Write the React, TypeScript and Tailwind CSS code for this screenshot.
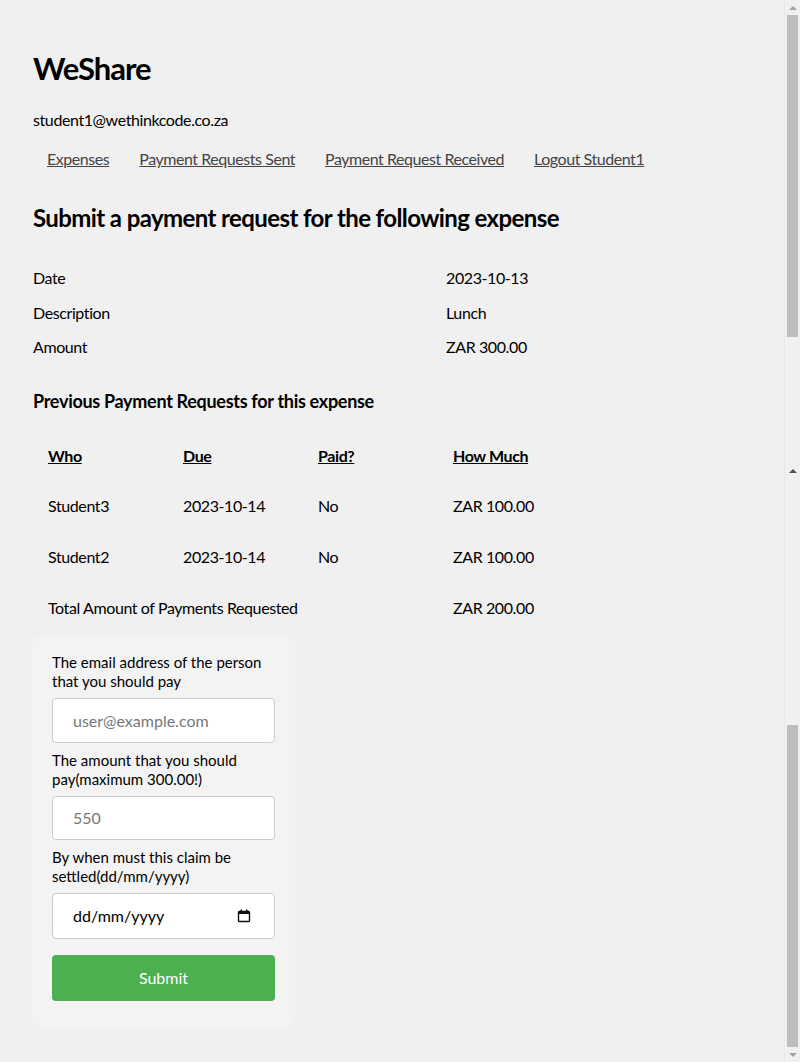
const details = [
  { label: "Date", value: "2023-10-13" },
  { label: "Description", value: "Lunch" },
  { label: "Amount", value: "ZAR 300.00" },
];

const requests = [
  { who: "Student3", due: "2023-10-14", paid: "No", amount: "ZAR 100.00" },
  { who: "Student2", due: "2023-10-14", paid: "No", amount: "ZAR 100.00" },
];

const links = ["Expenses", "Payment Requests Sent", "Payment Request Received", "Logout Student1"];

function FakeScrollbar() {
  return (
    <div className="w-[16px] shrink-0 border-l border-[#e8e8e8] bg-[#f0f0f0] flex flex-col">
      <div className="h-[466px] flex flex-col items-center">
        <div className="h-[15px] flex items-center justify-center">
          <div className="w-0 h-0 border-l-[4px] border-r-[4px] border-b-[4px] border-l-transparent border-r-transparent border-b-[#a3a3a3]" />
        </div>
        <div className="w-[11px] h-[322px] bg-[#bdbdbd]" />
      </div>
      <div className="flex-1 flex flex-col items-center">
        <div className="h-[10px] flex items-center justify-center">
          <div className="w-0 h-0 border-l-[4px] border-r-[4px] border-b-[4px] border-l-transparent border-r-transparent border-b-[#505050]" />
        </div>
        <div className="flex-1" />
        <div className="w-[11px] h-[322px] bg-[#bdbdbd]" />
        <div className="h-[15px] flex items-center justify-center">
          <div className="w-0 h-0 border-l-[4px] border-r-[4px] border-t-[4px] border-l-transparent border-r-transparent border-t-[#a3a3a3]" />
        </div>
      </div>
    </div>
  );
}

function CalendarIcon() {
  return (
    <svg width="14" height="14" viewBox="0 0 14 14" fill="none">
      <rect x="1.5" y="2.5" width="11" height="10" rx="1" stroke="#111" strokeWidth="1.4" />
      <rect x="1.5" y="2.5" width="11" height="2.5" fill="#111" />
      <rect x="3.5" y="0.5" width="1.5" height="2.5" fill="#111" />
      <rect x="9" y="0.5" width="1.5" height="2.5" fill="#111" />
    </svg>
  );
}

export default function App() {
  return (
    <div className="flex h-[1062px] overflow-hidden bg-[#f0f0f0] text-black font-['Lato',sans-serif]">
      <div className="flex-1 pl-[33px] pt-[46px]">
        <h1 className="text-[31px] font-bold leading-[44px] tracking-[-1px]">WeShare</h1>
        <p className="mt-[20px] text-[16px] leading-[20px] tracking-[-0.4px]">student1@wethinkcode.co.za</p>
        <ul className="flex mt-[19px] text-[16px] leading-[20px] tracking-[-0.45px] text-[#444]">
          {links.map((l) => (
            <li key={l} className="px-[15px] first:pl-[14px]">
              <a className="underline" href="#">{l}</a>
            </li>
          ))}
        </ul>

        <h2 className="mt-[34px] text-[24px] font-bold leading-[30px] tracking-[-0.6px]">
          Submit a payment request for the following expense
        </h2>

        <table className="mt-[28px] text-[16px] tracking-[-0.4px]">
          <tbody>
            {details.map((d) => (
              <tr key={d.label} className="h-[34.5px]">
                <td className="w-[413px]">{d.label}</td>
                <td>{d.value}</td>
              </tr>
            ))}
          </tbody>
        </table>

        <h3 className="mt-[24px] text-[18px] font-bold leading-[24px] tracking-[-0.3px]">
          Previous Payment Requests for this expense
        </h3>

        <table className="mt-[18px] text-[16px] tracking-[-0.4px]">
          <thead>
            <tr className="h-[50px]">
              {["Who", "Due", "Paid?", "How Much"].map((h) => (
                <th key={h} className="w-[135px] px-[15px] text-left font-bold underline">{h}</th>
              ))}
            </tr>
          </thead>
          <tbody>
            {requests.map((r) => (
              <tr key={r.who} className="h-[51px]">
                <td className="px-[15px]">{r.who}</td>
                <td className="px-[15px]">{r.due}</td>
                <td className="px-[15px]">{r.paid}</td>
                <td className="px-[15px]">{r.amount}</td>
              </tr>
            ))}
            <tr className="h-[50px]">
              <td colSpan={3} className="px-[15px]">Total Amount of Payments Requested</td>
              <td className="px-[15px]">ZAR 200.00</td>
            </tr>
          </tbody>
        </table>

        <form className="mt-[2px] ml-[-1px] w-[263px] rounded-[10px] bg-[#f3f3f3] px-[20px] pt-[18px] pb-[27px] text-[15px] leading-[19px]">
          <label className="block">The email address of the person that you should pay</label>
          <input
            className="mt-[7px] block w-full h-[45px] rounded-[4px] border border-[#ccc] bg-white px-[20px] text-[16px] placeholder:text-[#777]"
            placeholder="user@example.com"
          />
          <label className="block mt-[8px]">The amount that you should pay(maximum 300.00!)</label>
          <input
            className="mt-[7px] block w-full h-[44px] rounded-[4px] border border-[#ccc] bg-white px-[20px] text-[16px] placeholder:text-[#777]"
            placeholder="550"
          />
          <label className="block mt-[8px]">By when must this claim be settled(dd/mm/yyyy)</label>
          <div className="mt-[7px] flex items-center justify-between w-full h-[46px] rounded-[4px] border border-[#ccc] bg-white pl-[20px] pr-[23px] text-[16px]">
            <span>dd/mm/yyyy</span>
            <CalendarIcon />
          </div>
          <button
            type="button"
            className="mt-[16px] block w-full h-[46px] rounded-[4px] bg-[#4caf50] text-white text-[16px]"
          >
            Submit
          </button>
        </form>
      </div>
      <FakeScrollbar />
    </div>
  );
}
